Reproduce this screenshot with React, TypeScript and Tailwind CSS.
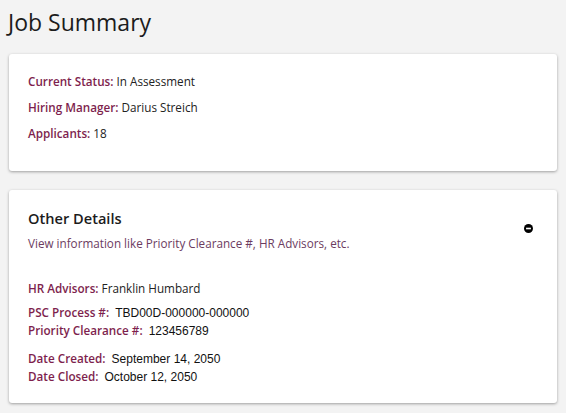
export default function App() {
  const labelCls = "text-[#7e1f4e] font-semibold";
  const valueCls = "ml-[3px] font-['Liberation_Sans',sans-serif] text-[12px] text-[#111]";
  return (
    <div className="min-h-[413px] bg-[#f3f3f3] px-[9px] pt-[4px] pb-[10px] font-['Open_Sans',sans-serif] text-[#222]">
      <h1 className="text-[23px] leading-[36px] text-[#1c1c1c] mb-[14px] -ml-[1px]">Job Summary</h1>

      <div className="bg-white rounded-[3px] shadow-[0_1px_3px_rgba(0,0,0,0.35)] pl-[19px] pr-4 pt-[17px] pb-[28px] flex flex-col gap-[6px] text-[11.7px] leading-[20px]">
        <div>
          <span className={labelCls}>Current Status:</span> In Assessment
        </div>
        <div>
          <span className={labelCls}>Hiring Manager:</span> Darius Streich
        </div>
        <div>
          <span className={labelCls}>Applicants:</span> 18
        </div>
      </div>

      <div className="mt-[19px] bg-white rounded-[3px] shadow-[0_1px_3px_rgba(0,0,0,0.35)] pl-[19px] pr-[24px] pt-[17px] pb-[17px]">
        <div className="flex items-start justify-between">
          <div>
            <h2 className="text-[14.6px] leading-[22px] font-semibold text-[#1c1c1c]">Other Details</h2>
            <p className="mt-[4px] text-[11.7px] leading-[20px] text-[#6c3c5f]">
              View information like Priority Clearance #, HR Advisors, etc.
            </p>
          </div>
          <svg width="9" height="9" viewBox="0 0 10 10" className="mt-[17px]">
            <circle cx="5" cy="5" r="5" fill="#000" />
            <rect x="2.3" y="4.1" width="5.4" height="1.8" fill="#fff" />
          </svg>
        </div>

        <div className="mt-[25px] text-[11.7px] leading-[20px]">
          <span className={labelCls}>HR Advisors:</span> Franklin Humbard
        </div>

        <div className="mt-[6px] flex flex-col text-[11.7px] leading-[17px]">
          <div>
            <span className={labelCls}>PSC Process #:</span>{" "}
            <span className={valueCls}>TBD00D-000000-000000</span>
          </div>
          <div>
            <span className={labelCls}>Priority Clearance #:</span>{" "}
            <span className={valueCls}>123456789</span>
          </div>
        </div>

        <div className="mt-[10px] flex flex-col text-[11.7px] leading-[17px]">
          <div>
            <span className={labelCls}>Date Created:</span>{" "}
            <span className={valueCls}>September 14, 2050</span>
          </div>
          <div>
            <span className={labelCls}>Date Closed:</span>{" "}
            <span className={valueCls}>October 12, 2050</span>
          </div>
        </div>
      </div>
    </div>
  );
}
